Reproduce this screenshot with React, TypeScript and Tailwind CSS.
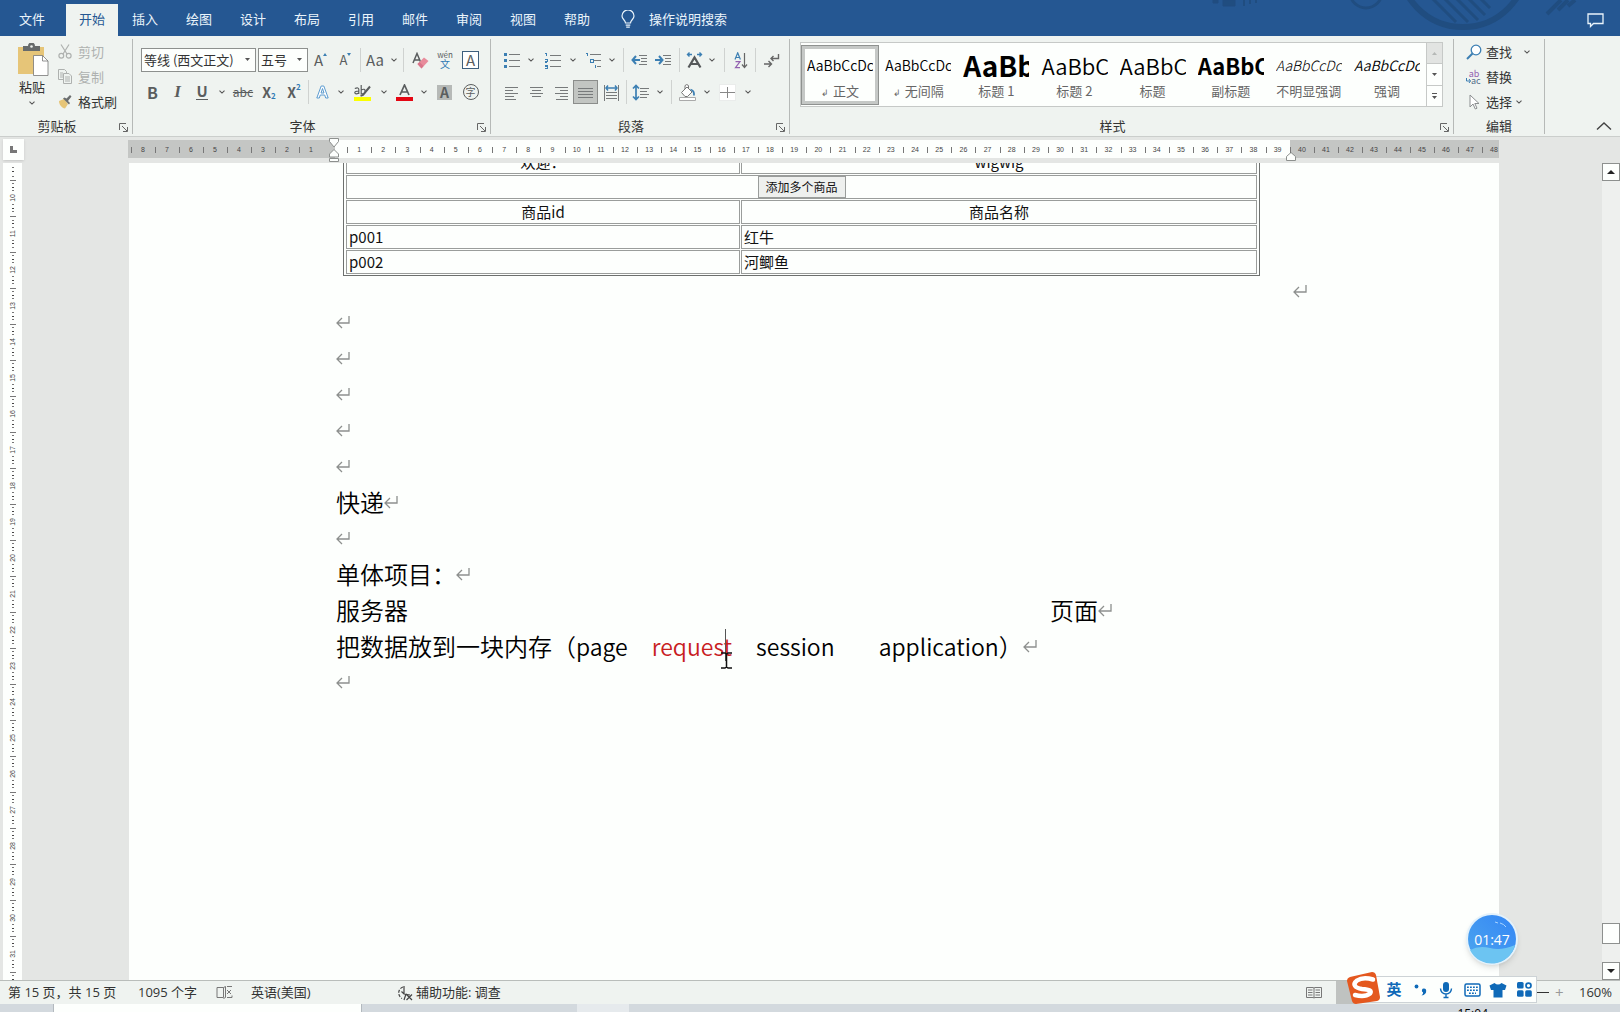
import type { ReactNode } from "react";
import { clsx } from "clsx";

const TABS = ["文件", "开始", "插入", "绘图", "设计", "布局", "引用", "邮件", "审阅", "视图", "帮助"];

const STYLES = [
  { name: "正文", mark: true, sample: "AaBbCcDc", cls: "text-[14px] font-[350]" },
  { name: "无间隔", mark: true, sample: "AaBbCcDc", cls: "text-[14px] font-[350]" },
  { name: "标题 1", sample: "AaBb", cls: "text-[28px] font-bold" },
  { name: "标题 2", sample: "AaBbC", cls: "text-[22px] font-[350]" },
  { name: "标题", sample: "AaBbC", cls: "text-[22px] font-[350]" },
  { name: "副标题", sample: "AaBbC", cls: "text-[22px] font-bold" },
  { name: "不明显强调", sample: "AaBbCcDc", cls: "text-[14px] font-light italic text-[#505050]" },
  { name: "强调", sample: "AaBbCcDc", cls: "text-[14px] font-[350] italic" },
];

const range = (from: number, to: number) => Array.from({ length: to - from + 1 }, (_, i) => from + i);

function Chevron() {
  return (
    <svg width="6" height="4" viewBox="0 0 6 4" fill="none" stroke="#555" strokeWidth="1.1">
      <path d="M.5.7 3 3.1 5.5.7" />
    </svg>
  );
}

function Tool({ label, w, active, children }: { label: string; w: string; active?: boolean; children: ReactNode }) {
  return (
    <button
      aria-label={label}
      className={clsx(
        "flex h-6 shrink-0 items-center justify-center",
        w,
        active && "border border-[#8b8d8b] bg-[#c2c5c2]"
      )}
    >
      {children}
    </button>
  );
}

function More({ w, label }: { w: string; label: string }) {
  return (
    <Tool label={label} w={w}>
      <Chevron />
    </Tool>
  );
}

function Sep({ w }: { w: string }) {
  return (
    <div className={clsx("flex h-6 shrink-0 justify-center", w)}>
      <div className="w-px bg-[#cfd2d0]" />
    </div>
  );
}

function Launcher({ label }: { label: string }) {
  return (
    <button aria-label={label} className="absolute right-1 bottom-0.5">
      <svg width="9" height="9" viewBox="0 0 9 9" fill="none" stroke="#666" strokeWidth="1">
        <path d="M.5 7V.5H7M3 3l5 5M8.500 4v4.500H4" />
      </svg>
    </button>
  );
}

function Group({ label, w, launcher, children }: { label: string; w: string; launcher?: boolean; children: ReactNode }) {
  return (
    <section aria-label={label} className={clsx("relative mt-[3px] mb-0.5 flex flex-col border-r border-[#b6b9b7]", w)}>
      <div className="flex-1">{children}</div>
      <div className={clsx("h-4 text-center text-[13px] leading-4 text-[#333]", launcher && "pr-[18px]")}>{label}</div>
      {launcher && <Launcher label={`${label}设置`} />}
    </section>
  );
}

function TitleArt() {
  return (
    <svg className="absolute top-0 right-10 h-9 w-[400px]" viewBox="0 0 400 36" fill="none" stroke="#204d80">
      <circle cx="283" cy="-37" r="64" strokeWidth="6" />
      <path d="M250-4l26 26M262-4l26 26M274-4l24 24M286-4l19 19M298-4l12 12" strokeWidth="3" />
      <circle cx="186" cy="-8" r="16" strokeWidth="3" />
      <path d="M43 0h12v6H43zM33 0h5v3h-5z" fill="#204d80" />
      <path d="M64 0v6M70 0v4M76 0v3" strokeWidth="2" />
      <path d="M367 14l14-14M378 10l10-10M388 6l7-6" strokeWidth="4" />
    </svg>
  );
}

function TitleTabs() {
  return (
    <header className="relative flex h-9 shrink-0 items-end bg-[#255792] text-[13px] text-[#eaf4fb]">
      <TitleArt />
      {TABS.map((t, i) => (
        <button
          key={t}
          className={clsx(
            "h-8 pb-0.5",
            i === 0 ? "w-[66px] pr-0.5" : i === 1 ? "w-[52px] bg-[#eff3f0] text-[#255792]" : "w-[54px]"
          )}
        >
          {t}
        </button>
      ))}
      <button className="flex h-8 items-center gap-3.5 pb-0.5 pl-[17px]">
        <svg width="14" height="18" viewBox="0 0 14 18" fill="none" stroke="#eaf4fb" strokeWidth="1.2">
          <path d="M4.500 13c0-3-3.500-3.600-3.500-7a6 6 0 0112 0c0 3.400-3.500 4-3.500 7z" />
          <path d="M4.700 15.200h4.600M5.200 17.200h3.600" />
        </svg>
        操作说明搜索
      </button>
      <button aria-label="批注" className="mr-4 mb-2 ml-auto">
        <svg width="17" height="15" viewBox="0 0 17 15" fill="none" stroke="#eaf4fb" strokeWidth="1.3">
          <path d="M1 1h15v9.500H6.500L3.500 13.500v-3H1z" />
        </svg>
      </button>
    </header>
  );
}

function ClipboardGroup() {
  return (
    <Group label="剪贴板" w="w-[133px]" launcher>
      <div className="flex text-[13px]">
        <button className="ml-4 flex w-8 flex-col items-center pt-1">
          <svg className="-mr-0.5" width="32" height="34" viewBox="0 0 32 34">
            <path d="M1 4h26v27H1z" fill="#e6c578" />
            <path d="M6 3h5a3.500 3.500 0 017 0h5v5H6z" fill="#676b6c" />
            <circle cx="14.500" cy="3.500" r="1.300" fill="#eff3f0" />
            <path d="M16.500 12.500h9l5.500 5.500v14.500H16.500z" fill="#fff" stroke="#777" strokeWidth=".8" />
            <path d="M25.500 12.500V18H31" fill="none" stroke="#777" strokeWidth=".8" />
          </svg>
          <span className="-mx-1 leading-5 text-[#333]">粘贴</span>
          <span className="mt-1">
            <Chevron />
          </span>
        </button>
        <div className="ml-2.5 flex flex-col">
          <button className="flex h-[25px] items-center gap-1.5 text-[#aeb1af]">
            <svg width="14" height="15" viewBox="0 0 14 15" fill="none" stroke="#aeb1af" strokeWidth="1.2">
              <path d="M3 .5l6 9.500M11 .5L5 10" />
              <circle cx="3.300" cy="11.700" r="2.400" />
              <circle cx="10.700" cy="11.700" r="2.400" />
            </svg>
            剪切
          </button>
          <button className="flex h-[25px] items-center gap-1.5 text-[#aeb1af]">
            <svg width="14" height="15" viewBox="0 0 14 15" fill="#eff3f0" stroke="#aeb1af" strokeWidth="1">
              <path d="M.5.5h6l2 2v8h-8z" />
              <path d="M5.500 4.500h5.500l2.500 2.500v7.500h-8zM7 8h5M7 10h5M7 12h5M2 4h3M2 6h3M2 8h3" />
            </svg>
            复制
          </button>
          <button className="flex h-[25px] items-center gap-1.5 text-[#333]">
            <svg width="14" height="14" viewBox="0 0 14 14">
              <path d="M1 6l5-2 4 5-3 4.500C4 13 1 10 1 6z" fill="#e6c578" />
              <path d="M5 3.500l6 6 1-1.500-2-2 3.500-4.500L12 0 8.500 3.500l-2-1z" fill="#6b6e6f" />
            </svg>
            格式刷
          </button>
        </div>
      </div>
    </Group>
  );
}

function Combo({ label, value, w }: { label: string; value: string; w: string }) {
  return (
    <div className={clsx("relative h-6", w)}>
      <select
        aria-label={label}
        defaultValue={value}
        className="block h-6 w-full appearance-none border border-[#8d908e] bg-[#fdfffd] pl-0.5 text-[13px] leading-5 text-[#333]"
      >
        <option>{value}</option>
      </select>
      <svg className="pointer-events-none absolute top-2.5 right-1.5" width="5" height="4" viewBox="0 0 5 4">
        <path d="M0 0h5L2.500 3z" fill="#555" />
      </svg>
    </div>
  );
}

function FontGroup() {
  return (
    <Group label="字体" w="w-[358px]" launcher>
      <div className="mt-[9px] flex items-center pl-2 text-[#5a5d5e]">
        <Combo label="字体名称" value="等线 (西文正文)" w="w-[115px]" />
        <div className="w-0.5" />
        <Combo label="字号" value="五号" w="w-[50px]" />
        <Tool label="增大字号" w="w-[25px]">
          <span className="text-[15px]">A</span>
          <svg className="mb-3" width="4" height="3" viewBox="0 0 4 3">
            <path d="M0 3l2-3 2 3z" fill="#3c7fb3" />
          </svg>
        </Tool>
        <Tool label="减小字号" w="w-[25px]">
          <span className="text-[13px]">A</span>
          <svg className="mb-3" width="4" height="3" viewBox="0 0 4 3">
            <path d="M0 0l2 3 2-3z" fill="#3c7fb3" />
          </svg>
        </Tool>
        <Sep w="w-1" />
        <Tool label="更改大小写" w="w-[26px]">
          <span className="text-[15px]">Aa</span>
        </Tool>
        <More label="大小写选项" w="w-[11px]" />
        <Sep w="w-[9px]" />
        <Tool label="清除格式" w="w-6">
          <svg width="17" height="17" viewBox="0 0 17 17">
            <path d="M1 11L5 1.500 9 11M2.500 8h5" fill="none" stroke="#5a5d5e" strokeWidth="1.500" />
            <path d="M5.500 12L12 5.500l4.500 3.500-7 7.500z" fill="#e88b9b" />
            <path d="M5.500 12l2-2 4 4-2 2.500z" fill="#d9748a" />
          </svg>
        </Tool>
        <Tool label="拼音指南" w="w-[26px]">
          <span className="flex flex-col items-center">
            <span className="h-2 text-[8px] leading-2">wén</span>
            <span className="h-2.5 text-[10px] leading-2.5 text-[#2f7ab5]">文</span>
          </span>
        </Tool>
        <Tool label="字符边框" w="w-[25px]">
          <span className="h-[18px] w-[17px] border border-[#3d5f7d] bg-white text-center text-[15px] leading-4">A</span>
        </Tool>
      </div>
      <div className="mt-2 flex items-center pl-[7px] text-[#5a5d5e]">
        <Tool label="加粗" w="w-[25px]">
          <b className="text-[16px]">B</b>
        </Tool>
        <Tool label="倾斜" w="w-[25px]">
          <b className="font-['Liberation_Serif',serif] text-[17px] italic">I</b>
        </Tool>
        <Tool label="下划线" w="w-6">
          <span className="h-4 border-b border-[#5a5d5e] text-[15px] leading-3.5 font-semibold">U</span>
        </Tool>
        <More label="下划线选项" w="w-4" />
        <Tool label="删除线" w="w-[26px]">
          <s className="text-[12px]">abc</s>
        </Tool>
        <Tool label="下标" w="w-[26px]">
          <b className="text-[14px]">X</b>
          <span className="mt-2 text-[8px] font-bold text-[#2f7ab5]">2</span>
        </Tool>
        <Tool label="上标" w="w-6">
          <b className="text-[14px]">X</b>
          <span className="mb-2.5 text-[8px] font-bold text-[#2f7ab5]">2</span>
        </Tool>
        <Sep w="w-1" />
        <Tool label="文本效果" w="w-[25px]">
          <svg width="13" height="14" viewBox="0 0 13 14" fill="#fff" stroke="#5b9bd0" strokeWidth="1">
            <path d="M.8 13L5.200 1h2.600l4.400 12H9.700l-1-3H4.300l-1 3zM5 8h3L6.500 3.500z" />
          </svg>
        </Tool>
        <More label="文本效果选项" w="w-3" />
        <Tool label="突出显示" w="w-[30px]">
          <svg width="17" height="17" viewBox="0 0 17 17" fill="none" stroke="#5a5d5e" strokeWidth="1.200">
            <path d="M.8 4.500q4-1.500 4 1V10M4.800 7Q.6 7 .8 8.800 1.500 10.800 4.800 9M7.200 1v9M7.200 6q4-2 4 1.300T7.200 9.500" />
            <path d="M16 2.500L9 11l-2.500.8" strokeWidth="2" />
            <path d="M0 15h17" stroke="#fbff00" strokeWidth="4" />
          </svg>
        </Tool>
        <More label="突出显示选项" w="w-3.5" />
        <Tool label="字体颜色" w="w-[26px]">
          <svg width="17" height="17" viewBox="0 0 17 17" fill="none" stroke="#5a5d5e">
            <path d="M4 11L8.500 1 13 11M5.500 8h6" strokeWidth="1.700" />
            <path d="M0 15h17" stroke="#e40613" strokeWidth="4" />
          </svg>
        </Tool>
        <More label="字体颜色选项" w="w-3.5" />
        <Tool label="字符底纹" w="w-[27px]">
          <span className="h-[15px] w-[15px] bg-[#b6b9b7] text-center text-[14px] leading-[15px] font-semibold">A</span>
        </Tool>
        <Tool label="带圈字符" w="w-[25px]">
          <span className="h-4 w-4 rounded-full border border-[#5a5d5e] text-center text-[10px] leading-3.5">字</span>
        </Tool>
      </div>
    </Group>
  );
}

function Lines({ d, children }: { d: string; children?: ReactNode }) {
  return (
    <svg width="17" height="17" viewBox="0 0 17 17" fill="none" stroke="#777a7b" strokeWidth="1" shapeRendering="crispEdges">
      <path d={d} />
      {children}
    </svg>
  );
}

const dot = "#3c7fb3";

function ParagraphGroup() {
  return (
    <Group label="段落" w="w-[299px]" launcher>
      <div className="mt-[9px] flex items-center pl-[9px]">
        <Tool label="项目符号" w="w-6">
          <Lines d="M5 2.500h11M5 8.500h11M5 14.500h11">
            <path d="M0 2.500h3M0 8.500h3M0 14.500h3" stroke={dot} strokeWidth="3" />
          </Lines>
        </Tool>
        <More label="项目符号选项" w="w-3.5" />
        <Tool label="编号" w="w-7">
          <Lines d="M6 3.500h11M6 8.500h11M6 14.500h11">
            <path d="M1 1h1v3M1 7h2v2H1v1h2M1 13h2v3H1M1 14.500h2" stroke={dot} />
          </Lines>
        </Tool>
        <More label="编号选项" w="w-3.5" />
        <Tool label="多级列表" w="w-[26px]">
          <Lines d="M5 2.500h11M9 8.500h7M12 14.500h4">
            <path d="M1 1h1v3M5 7h3v3H5zM10 13v3" stroke={dot} />
          </Lines>
        </Tool>
        <More label="多级列表选项" w="w-3" />
        <Sep w="w-2.5" />
        <Tool label="减少缩进" w="w-[23px]">
          <Lines d="M8 3.500h8M10 6.500h6M10 9.500h6M8 12.500h8">
            <path d="M9 8H2M5 4L1.500 8 5 12" stroke={dot} strokeWidth="2" shapeRendering="auto" />
          </Lines>
        </Tool>
        <Tool label="增加缩进" w="w-[25px]">
          <Lines d="M8 3.500h8M10 6.500h6M10 9.500h6M8 12.500h8">
            <path d="M0 8h7M4 4l3.500 4L4 12" stroke={dot} strokeWidth="2" shapeRendering="auto" />
          </Lines>
        </Tool>
        <Sep w="w-1.5" />
        <Tool label="中文版式" w="w-6">
          <svg width="17" height="17" viewBox="0 0 17 17" fill="none" stroke="#55585a" strokeWidth="2.200">
            <path d="M2.500 15.500l6-10 6 10M5 12h7" />
            <path d="M6 2.500H1.500M3.500.5l-2 2 2 2M11 2.500h4.500M13.500.5l2 2-2 2" stroke={dot} strokeWidth="1.400" />
          </svg>
        </Tool>
        <More label="中文版式选项" w="w-3" />
        <Sep w="w-3" />
        <Tool label="排序" w="w-[21px]">
          <svg width="14" height="17" viewBox="0 0 14 17" fill="none" strokeWidth="1.200">
            <path d="M1 7.500L3.700.8l2.700 6.700M2 5.500h3.500" stroke={dot} />
            <path d="M1.500 9.700h4.500l-4.500 6H6" stroke="#9361b0" />
            <path d="M10.500 1v14.500M8 12.500l2.500 3 2.500-3" stroke="#666" />
          </svg>
        </Tool>
        <Sep w="w-2" />
        <Tool label="显示编辑标记" w="w-6">
          <svg width="17" height="17" viewBox="0 0 17 17" fill="none" stroke="#666" strokeWidth="1.400">
            <path d="M15.500 2v4.500H8M10.500 4L8 6.500 10.500 9M1 12h7M5.500 9L8.500 12l-3 3" />
          </svg>
        </Tool>
      </div>
      <div className="mt-2 flex items-center pl-[9px]">
        <Tool label="左对齐" w="w-[23px]">
          <Lines d="M2 3.500h13M2 6.500h8M2 9.500h13M2 12.500h9M2 15.500h11" />
        </Tool>
        <Tool label="居中" w="w-[26px]">
          <Lines d="M2 3.500h13M4 6.500h9M2 9.500h13M4 12.500h9" />
        </Tool>
        <Tool label="右对齐" w="w-6">
          <Lines d="M2 3.500h13M7 6.500h8M2 9.500h13M7 12.500h8M3 15.500h12" />
        </Tool>
        <Tool label="两端对齐" w="w-[25px]" active>
          <Lines d="M1 4.500h15M1 7.500h15M1 10.500h15M1 13.500h15" />
        </Tool>
        <Tool label="分散对齐" w="w-[26px]">
          <Lines d="M1.500 1v16M15.500 1v16M3 8.500h11M3 11.500h11M3 14.500h11">
            <path d="M3 4h11M5 1.500L3 4l2 2.500M12 1.500L14 4l-2 2.500" stroke={dot} strokeWidth="1.500" shapeRendering="auto" />
          </Lines>
        </Tool>
        <Sep w="w-1" />
        <Tool label="行距" w="w-[25px]">
          <Lines d="M8 4.500h9M8 7.500h7M8 10.500h9M8 13.500h7">
            <path d="M4 1v15M1 4.500L4 1.500l3 3M1 12.500l3 3 3-3" stroke={dot} strokeWidth="1.700" shapeRendering="auto" />
          </Lines>
        </Tool>
        <More label="行距选项" w="w-[13px]" />
        <Sep w="w-2.5" />
        <Tool label="底纹" w="w-[23px]">
          <svg width="17" height="17" viewBox="0 0 17 17" fill="none" stroke="#777" strokeWidth="1">
            <path d="M2.500 8.500L8 3l5 5-4.500 4.500H6zM6 5V2a1.800 1.800 0 013.500 0v3" fill="#fff" />
            <path d="M11.500 5.500q4 1 3.500 6" stroke={dot} strokeWidth="1.800" />
            <path d="M.5 13.500h16v3H.5z" fill="#fff" stroke="#aaa" />
          </svg>
        </Tool>
        <More label="底纹选项" w="w-4" />
        <Tool label="边框" w="w-[25px]">
          <svg width="17" height="17" viewBox="0 0 17 17" fill="none" stroke="#888">
            <path d="M0 0h17v17H0z" fill="#fff" stroke="none" />
            <path d="M8.500 3v11M1 8.500h15" />
            <path d="M.5.5h16v16H.5z" stroke="#d5d8d6" strokeDasharray="1 1" />
          </svg>
        </Tool>
        <More label="边框选项" w="w-4" />
      </div>
    </Group>
  );
}

function StylesGroup() {
  return (
    <Group label="样式" w="min-w-0 flex-1" launcher>
      <div className="mt-[3px] mr-2.5 ml-2.5 flex h-[65px] border border-[#c6c9c7] bg-[#fdfffd]">
        <div className="flex flex-1 overflow-hidden">
          {STYLES.map((s, i) => (
            <button
              key={s.name}
              className={clsx(
                "mt-0.5 flex h-[60px] min-w-0 flex-1 flex-col items-center border-4 px-0.5",
                i === 0 ? "border-[#c5c8c6] outline -outline-offset-1 outline-[#8f9290]" : "border-transparent"
              )}
            >
              <span className={clsx("h-[34px] w-full overflow-hidden text-left leading-8 whitespace-nowrap text-black", s.cls)}>
                {s.sample}
              </span>
              <span className="text-[13px] leading-4 whitespace-nowrap text-[#666]">
                {s.mark && <span className="mr-1 text-[9px]">↲</span>}
                {s.name}
              </span>
            </button>
          ))}
        </div>
        <div className="flex w-4 flex-col divide-y divide-[#c6c9c7] border-l border-[#c6c9c7]">
          <button aria-label="上一行" className="flex flex-1 items-center justify-center bg-[#e2e4e2]">
            <svg width="5" height="3" viewBox="0 0 5 3"><path d="M0 3h5L2.500 0z" fill="#b5b8b6" /></svg>
          </button>
          <button aria-label="下一行" className="flex flex-1 items-center justify-center">
            <svg width="5" height="3" viewBox="0 0 5 3"><path d="M0 0h5L2.500 3z" fill="#555" /></svg>
          </button>
          <button aria-label="其他样式" className="flex flex-1 items-center justify-center">
            <svg width="5" height="6" viewBox="0 0 5 6"><path d="M0 0h5v1H0zM0 3h5L2.500 6z" fill="#555" /></svg>
          </button>
        </div>
      </div>
    </Group>
  );
}

function EditGroup() {
  return (
    <Group label="编辑" w="w-[91px]">
      <div className="flex flex-col pl-3 text-[13px] text-[#333]">
        <button className="flex h-[25px] items-center gap-1">
          <svg width="16" height="16" viewBox="0 0 16 16" fill="none" stroke="#3c7fb3" strokeWidth="1.300">
            <circle cx="10" cy="6" r="4.800" fill="#fff" />
            <path d="M6.500 9.500L1 15" strokeWidth="2" />
          </svg>
          查找
          <span className="ml-2"><Chevron /></span>
        </button>
        <button className="flex h-[25px] items-center gap-1">
          <span className="flex w-4 flex-col text-[9px] leading-[7px]">
            <span className="text-[#9361b0]">ab</span>
            <span className="flex items-center text-[#55718c]">
              <svg width="5" height="5" viewBox="0 0 5 5" fill="none" stroke="#3c7fb3"><path d="M.5 0v3h4M3 1l1.500 2L3 5" /></svg>
              ac
            </span>
          </span>
          替换
        </button>
        <button className="flex h-[25px] items-center gap-1">
          <svg width="16" height="16" viewBox="0 0 16 16" fill="#fff" stroke="#8b8e90" strokeWidth="1">
            <path d="M4 1v12l3-3 2.300 5 1.700-.8L8.800 9.500H13z" />
          </svg>
          选择
          <Chevron />
        </button>
      </div>
    </Group>
  );
}

function Ribbon() {
  return (
    <div className="flex h-[101px] shrink-0 border-b border-[#cbcecc] bg-[#eff3f0]">
      <ClipboardGroup />
      <FontGroup />
      <ParagraphGroup />
      <StylesGroup />
      <EditGroup />
      <div className="flex w-[75px] items-end justify-end pr-2 pb-1.5">
        <button aria-label="折叠功能区">
          <svg width="16" height="8" viewBox="0 0 16 8" fill="none" stroke="#444" strokeWidth="1.400">
            <path d="M1 7.500l7-6.500 7 6.500" />
          </svg>
        </button>
      </div>
    </div>
  );
}

function RulerCells({ nums, cell }: { nums: number[]; cell: string }) {
  return (
    <>
      {nums.map((n) => (
        <div key={n} className={clsx("relative flex items-center justify-center pt-0.5", cell)}>
          <span className="absolute left-0 h-1.5 w-px bg-[#777]" />
          {n}
        </div>
      ))}
    </>
  );
}

function Ruler() {
  return (
    <div className="flex h-[26px] shrink-0 bg-[#e4e6e4] font-['Liberation_Sans',sans-serif] text-[7px] text-[#444]">
      <div className="flex w-[128px] shrink-0 pt-0.5 pl-[3px]">
        <button aria-label="制表符" className="flex h-[21px] w-[21px] items-center justify-center bg-[#fdfffd] shadow">
          <svg width="7" height="7" viewBox="0 0 7 7"><path d="M0 0h3v4h4v3H0z" fill="#777" /></svg>
        </button>
      </div>
      <div className="mt-[3px] flex h-[18px] min-w-0 flex-1">
        <div className="flex w-[207px] shrink-0 justify-end bg-[#c4c6c4] pr-3">
          <RulerCells nums={range(1, 8).reverse()} cell="w-6" />
        </div>
        <div className="relative flex flex-1 bg-[#fdfffd] pl-3">
          <RulerCells nums={range(1, 39)} cell="flex-1" />
          <svg className="absolute -top-0.5 -left-1.5" width="11" height="25" viewBox="0 0 11 25" fill="#fdfffd" stroke="#8d908e">
            <path d="M.5.500h9v3L5 9 .5 3.500zM.5 19v-3L5 11.500 9.500 16v3zM.5 20.500h9v3h-9z" />
          </svg>
          <svg className="absolute top-3 -right-1.5" width="10" height="9" viewBox="0 0 10 9" fill="#fdfffd" stroke="#8d908e">
            <path d="M.5 8.500v-4L5 .500l4.500 4v4z" />
          </svg>
        </div>
        <div className="flex w-[209px] shrink-0 overflow-hidden bg-[#c4c6c4]">
          <RulerCells nums={range(40, 48)} cell="w-6 shrink-0" />
        </div>
      </div>
      <div className="w-[121px] shrink-0" />
    </div>
  );
}

function Ticks() {
  return (
    <>
      <span className="h-px w-0.5 bg-[#777]" />
      <span className="h-px w-0.5 bg-[#444]" />
      <span className="h-px w-0.5 bg-[#777]" />
    </>
  );
}

function SideRuler() {
  return (
    <div className="ml-[3px] flex w-[19px] shrink-0 flex-col overflow-hidden bg-[#fdfffd] font-['Liberation_Sans',sans-serif] text-[7px] text-[#444]">
      <div className="flex h-[17px] shrink-0 flex-col items-center justify-evenly">
        <Ticks />
      </div>
      {range(10, 32).map((n) => (
        <div key={n} className="flex h-9 shrink-0 flex-col items-center justify-between pb-1">
          <span className="h-px w-1.5 bg-[#777]" />
          <Ticks />
          <span className="rotate-180 leading-2 [writing-mode:vertical-rl]">{n}</span>
          <Ticks />
        </div>
      ))}
    </div>
  );
}

function ParaMark() {
  return (
    <svg className="inline-block shrink-0" width="14" height="13" viewBox="0 0 14 13" fill="none" stroke="#8d908e" strokeWidth="1.300">
      <path d="M13 0v7H1M6 2L1 7l5 5" />
    </svg>
  );
}

function Line({ children }: { children?: ReactNode }) {
  return (
    <p className="flex h-9 items-center whitespace-nowrap">
      {children}
      <ParaMark />
    </p>
  );
}

const cell = "h-6 border border-[#9a9d9b] px-0.5 py-0 leading-5";

function ProductTable() {
  return (
    <table className="-mt-[15px] ml-[7px] w-[917px] table-fixed border-separate border-spacing-px border border-[#6d706e] px-px text-[15px]">
      <colgroup>
        <col className="w-[394px]" />
        <col />
      </colgroup>
      <tbody>
        <tr>
          <td className={clsx(cell, "text-center")}>欢迎：</td>
          <td className={clsx(cell, "text-center")}>wigwig</td>
        </tr>
        <tr>
          <td colSpan={2} className={clsx(cell, "text-center")}>
            <button className="mx-auto block h-[22px] w-[88px] border border-[#9a9d9b] bg-[#eef0ee] text-[12px]">
              添加多个商品
            </button>
          </td>
        </tr>
        <tr>
          <th className={clsx(cell, "font-normal")}>商品id</th>
          <th className={clsx(cell, "font-normal")}>商品名称</th>
        </tr>
        <tr>
          <td className={cell}>p001</td>
          <td className={cell}>红牛</td>
        </tr>
        <tr>
          <td className={cell}>p002</td>
          <td className={cell}>河鲫鱼</td>
        </tr>
      </tbody>
    </table>
  );
}

function DocumentPage() {
  return (
    <article className="min-w-0 flex-1 overflow-hidden bg-[#fdfffd] pl-[207px] text-[24px] text-black">
      <div className="flex h-[141px] items-end text-[#111]">
        <div className="self-start"><ProductTable /></div>
        <span className="mb-1.5 ml-[33px] flex"><ParaMark /></span>
      </div>
      <div className="font-[350]">
        <Line />
        <Line />
        <Line />
        <Line />
        <Line />
        <Line>快递</Line>
        <Line />
        <Line>单体项目：</Line>
        <Line>
          <span className="w-[714px]">服务器</span>页面
        </Line>
        <Line>
          把数据放到一块内存（
          <span className="text-[23px]">page</span>
          <span className="relative ml-6 text-[23px] text-[#c8201f]">
            request
            <span className="absolute top-0 right-1.5 h-8 w-px bg-[#555]" />
            <svg className="absolute right-0 -bottom-1.5" width="11" height="17" viewBox="0 0 11 17" fill="none" stroke="#111" strokeWidth="1.500">
              <path d="M0 1h4l1.500 1L7 1h4M5.500 2v13M0 16h4l1.500-1L7 16h4" />
            </svg>
          </span>
          <span className="ml-6 text-[23px]">session</span>
          <span className="ml-11 text-[23px]">application</span>）
        </Line>
        <Line />
      </div>
    </article>
  );
}

function ScrollBar() {
  const box = "flex h-[18px] items-center justify-center border border-[#8d908e] bg-[#fdfffd]";
  return (
    <div className="flex w-[18px] shrink-0 flex-col bg-[#eef0ee]">
      <button aria-label="向上滚动" className={box}>
        <svg width="8" height="4" viewBox="0 0 8 4"><path d="M0 4h8L4 0z" fill="#222" /></svg>
      </button>
      <div className="flex-1" />
      <div className="h-[21px] border border-[#8d908e] bg-[#fdfffd]" />
      <div className="h-[18px]" />
      <button aria-label="向下滚动" className={box}>
        <svg width="8" height="4" viewBox="0 0 8 4"><path d="M0 0h8L4 4z" fill="#222" /></svg>
      </button>
    </div>
  );
}

function StatusBar() {
  return (
    <footer className="flex h-6 shrink-0 items-center border-t border-[#b9bdba] bg-[#eff3f0] pl-2 font-['Open_Sans','Noto_Sans_CJK_SC',sans-serif] text-[13px] text-[#333]">
      <span className="w-[130px] whitespace-nowrap">第 15 页，共 15 页</span>
      <span className="w-[78px] whitespace-nowrap">1095 个字</span>
      <svg width="17" height="13" viewBox="0 0 17 13" fill="none" stroke="#777">
        <path d="M1 1.500h6.500v10H1zM7.500 1.500l2-1v11l-2 1M11 11.500h5v-2M11 .5h5M11 4l4 4M15 4l-4 4" />
      </svg>
      <span className="ml-[18px] w-[146px]">英语(美国)</span>
      <svg width="16" height="16" viewBox="0 0 16 16" fill="none" stroke="#444" strokeWidth="1.200">
        <path d="M6 2A6.300 6.300 0 005 13.500" strokeDasharray="3 1.500" />
        <path d="M7 1v8M4.500 6.500L7 9l6 1M9 9l-2 6M9 9l6 6M15 9.500L9.500 15" />
      </svg>
      <span className="ml-[3px]">辅助功能: 调查</span>
      <button aria-label="阅读视图" className="ml-auto">
        <svg width="16" height="13" viewBox="0 0 16 13" fill="none" stroke="#777">
          <path d="M.5 1.500H7l1 .5 1-.5h6.500v10H9l-1 .5-1-.5H.5zM8 2v10M2 4h4.500M2 6.500h4.500M2 9h4.500M9.500 4H14M9.500 6.500H14M9.500 9H14" />
        </svg>
      </button>
      <div className="ml-3.5 h-full w-[201px] bg-gradient-to-r from-[#bfc2c0] from-10% to-[#eff3f0] to-10%" />
      <button aria-label="缩小" className="w-[18px]"><span className="block h-px w-3 bg-[#333]" /></button>
      <button aria-label="放大" className="w-6 text-left text-[15px] text-[#999]">+</button>
      <span className="w-[41px]">160%</span>
    </footer>
  );
}

function TaskbarEdge() {
  return (
    <div className="flex h-2 shrink-0 overflow-hidden bg-[#d3d9de]">
      <div className="ml-[53px] w-[309px] border-x border-[#b3b9be] bg-[#fdfffd]" />
      <div className="ml-[215px] w-[52px] bg-[#e6eaed]" />
      <span className="mt-0.5 mr-[132px] ml-auto font-['Open_Sans',sans-serif] text-[12px] leading-4 text-black">15:04</span>
    </div>
  );
}

function TimerBubble() {
  return (
    <div className="absolute right-[102px] bottom-[47px] flex h-[52px] w-[52px] items-center justify-center rounded-full bg-[#e4f2fb] shadow-md">
      <svg className="absolute inset-0" width="52" height="52" viewBox="0 0 52 52">
        <defs>
          <linearGradient id="bubble" x1="1" y1="0" x2="0" y2="1">
            <stop offset="0" stopColor="#3486f5" />
            <stop offset="1" stopColor="#4da6ee" />
          </linearGradient>
        </defs>
        <circle cx="26" cy="26" r="24" fill="url(#bubble)" />
        <path d="M4 37q9-5 20-2t25-3a24 24 0 01-45 5z" fill="#6cc4f2" />
        <path d="M29 9l3 1M34 10q4 1 6 4" fill="none" stroke="#a9d4ff" />
      </svg>
      <span className="relative font-['Open_Sans',sans-serif] text-[14px] text-white">01:47</span>
    </div>
  );
}

function ImeBar() {
  return (
    <div className="absolute right-[83px] bottom-[9px] flex h-[27px] w-[176px] items-center border border-[#cdd3d6] bg-[#fdfffd] pl-6 text-[#0f6ab8]">
      <svg className="absolute -top-1.5 -left-4" width="36" height="34" viewBox="0 0 36 34">
        <path d="M4 6L26 1q3 0 4 3l4 22q0 3-3 4L10 33q-3 0-4-3L1 10q0-3 3-4z" fill="#e4581f" />
        <path
          d="M27 8.500Q17 5.500 11 9.500c-5 4-2 7.500 5 8.500 8 .500 10 2 8 4.500q-5 4-15 1.500"
          fill="none"
          stroke="#fff"
          strokeWidth="4.500"
          strokeLinecap="round"
        />
      </svg>
      <button className="w-4 text-[15px] font-bold">英</button>
      <svg className="ml-3" width="13" height="14" viewBox="0 0 13 14" fill="#0f6ab8">
        <circle cx="2.500" cy="3.500" r="1.900" />
        <path d="M10 5.500a2 2 0 00-1 3.800q.5 2-1.500 3.200 5-.8 4.700-5A2.100 2.100 0 0010 5.500z" />
      </svg>
      <svg className="ml-3" width="14" height="18" viewBox="0 0 14 18" fill="#0f6ab8">
        <rect x="4" y="1" width="6" height="10" rx="3" />
        <path d="M1.500 7.500a5.500 5.500 0 0011 0M7 13v3M4.500 16.500h5" fill="none" stroke="#0f6ab8" strokeWidth="1.400" />
      </svg>
      <svg className="ml-[11px]" width="17" height="14" viewBox="0 0 17 14" fill="none" stroke="#0f6ab8" strokeWidth="1.500">
        <rect x="1" y="1" width="15" height="12" rx="1.500" />
        <path d="M3 4.300h11M3 7.200h11M5 10.200h7" strokeDasharray="1.800 1.200" strokeWidth="1.600" />
      </svg>
      <svg className="ml-2" width="18" height="16" viewBox="0 0 18 16" fill="#0f6ab8">
        <path d="M5.500 1q3.500 3 7 0L17.500 3.500 16 8h-2.500v7.500h-9V8H2L.5 3.500z" />
      </svg>
      <svg className="ml-2.5" width="15" height="15" viewBox="0 0 15 15" fill="#0f6ab8">
        <rect x="0" y="0" width="6.600" height="6.600" rx="1.500" />
        <rect x="0" y="8.200" width="6.600" height="6.600" rx="1.500" />
        <rect x="8.200" y="8.200" width="6.600" height="6.600" rx="1.500" />
        <path d="M11.500 1.200q2.500 0 2.500 2.400T11.500 6 9 3.600t2.500-2.400z" fill="none" stroke="#0f6ab8" strokeWidth="1.700" />
      </svg>
    </div>
  );
}

export default function App() {
  return (
    <div className="relative flex h-screen flex-col overflow-hidden bg-[#e4e6e4] font-['Noto_Sans_CJK_SC',sans-serif]">
      <TitleTabs />
      <Ribbon />
      <Ruler />
      <main className="flex min-h-0 flex-1">
        <SideRuler />
        <div className="w-[107px] shrink-0" />
        <DocumentPage />
        <div className="w-[103px] shrink-0" />
        <ScrollBar />
      </main>
      <StatusBar />
      <TaskbarEdge />
      <TimerBubble />
      <ImeBar />
    </div>
  );
}
